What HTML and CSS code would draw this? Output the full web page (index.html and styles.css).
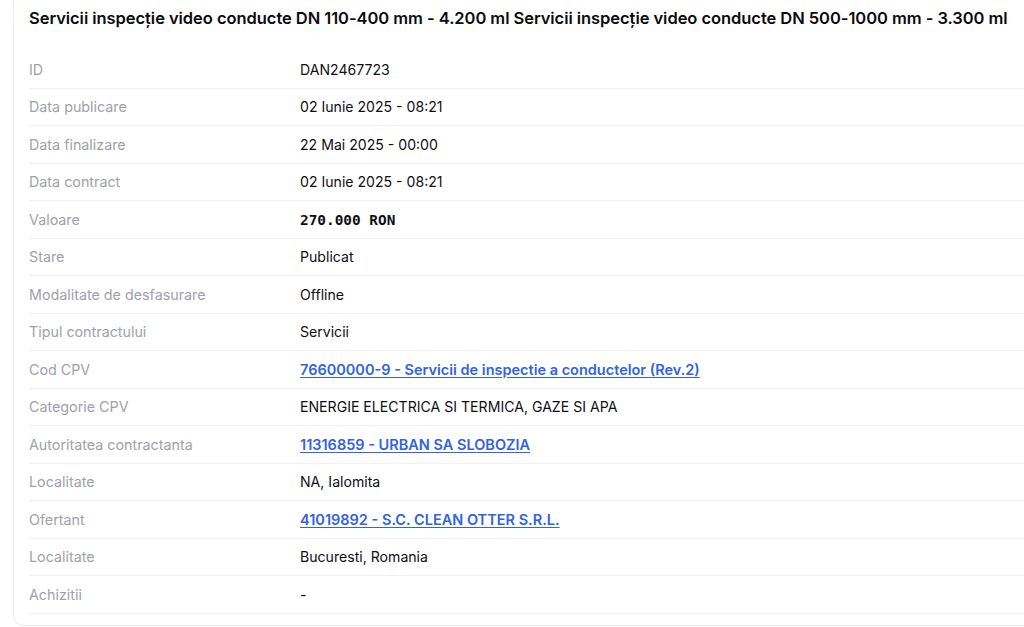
FILE: index.html
```html
<!DOCTYPE html>
<html lang="ro">
<head>
<meta charset="utf-8">
<title>Detalii contract</title>
<link rel="stylesheet" href="styles.css">
</head>
<body>
<section class="card">
  <h1 class="title">Servicii inspecție video conducte DN 110-400 mm - 4.200 ml Servicii inspecție video conducte DN 500-1000 mm - 3.300 ml</h1>
  <dl class="details">
    <div class="row"><dt>ID</dt><dd>DAN2467723</dd></div>
    <div class="row"><dt>Data publicare</dt><dd>02 Iunie 2025 - 08:21</dd></div>
    <div class="row"><dt>Data finalizare</dt><dd>22 Mai 2025 - 00:00</dd></div>
    <div class="row"><dt>Data contract</dt><dd>02 Iunie 2025 - 08:21</dd></div>
    <div class="row"><dt>Valoare</dt><dd class="money">270.000 RON</dd></div>
    <div class="row"><dt>Stare</dt><dd>Publicat</dd></div>
    <div class="row"><dt>Modalitate de desfasurare</dt><dd>Offline</dd></div>
    <div class="row"><dt>Tipul contractului</dt><dd>Servicii</dd></div>
    <div class="row"><dt>Cod CPV</dt><dd><a class="link" href="#">76600000-9 - Servicii de inspectie a conductelor (Rev.2)</a></dd></div>
    <div class="row"><dt>Categorie CPV</dt><dd>ENERGIE ELECTRICA SI TERMICA, GAZE SI APA</dd></div>
    <div class="row"><dt>Autoritatea contractanta</dt><dd><a class="link" href="#">11316859 - URBAN SA SLOBOZIA</a></dd></div>
    <div class="row"><dt>Localitate</dt><dd>NA, Ialomita</dd></div>
    <div class="row"><dt>Ofertant</dt><dd><a class="link" href="#">41019892 - S.C. CLEAN OTTER S.R.L.</a></dd></div>
    <div class="row"><dt>Localitate</dt><dd>Bucuresti, Romania</dd></div>
    <div class="row"><dt>Achizitii</dt><dd>-</dd></div>
  </dl>
</section>
</body>
</html>
```

FILE: styles.css
```css
html, body {
  margin: 0;
  padding: 0;
  overflow: hidden;
  background: #ffffff;
}
body {
  font-family: Inter, "Noto Sans", sans-serif;
  color: #111827;
  padding-left: 13px;
}
.card {
  margin-top: -13px;
  margin-right: -60px;
  border: 1px solid #ebebed;
  border-radius: 10px;
  padding: 16px 0 11px 15px;
}
.title {
  margin: 0 0 19px 0;
  font-size: 16.5px;
  line-height: 28px;
  font-weight: 600;
  color: #0b0b0f;
  white-space: nowrap;
  letter-spacing: -0.05px;
}
.details {
  margin: 0;
}
.row {
  display: grid;
  grid-template-columns: 271px 1fr;
  border-bottom: 1px solid #f0f0f2;
  padding: 8.5px 0 8px;
  font-size: 14px;
  line-height: 20px;
}
.row dt {
  color: #a1a1aa;
  font-size: 14.3px;
}
.row dd {
  margin: 0;
  color: #0f0f14;
  font-size: 14.1px;
}
.row dd.money {
  font-family: "DejaVu Sans Mono", "Liberation Mono", monospace;
  font-weight: 700;
  font-size: 14.4px;
}
.link {
  color: #3262e6;
  font-weight: 600;
  font-size: 14.5px;
  text-decoration: underline;
  text-underline-offset: 2px;
}
```
